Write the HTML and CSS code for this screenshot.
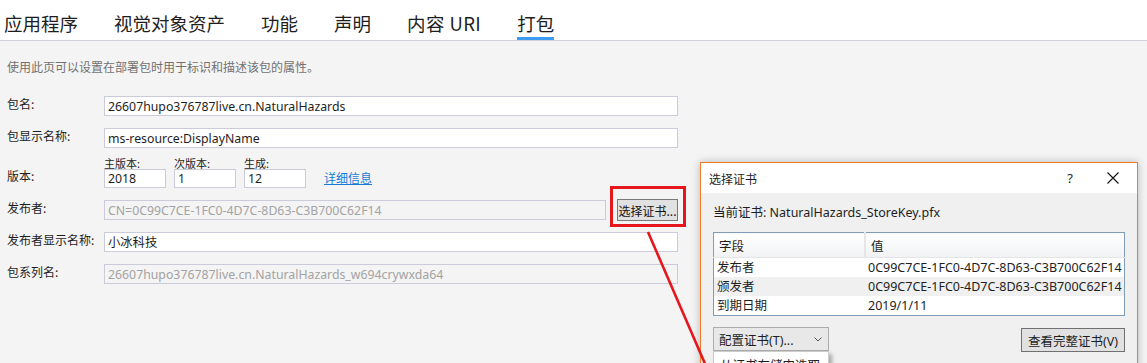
FILE: index.html
```html
<!doctype html>
<html>

	<head>
		<title>打包</title>
		<meta charset="utf-8" />
		<link rel="stylesheet" href="styles.css">
	</head>

	<body>

		<ul class="tabs">
			<li>应用程序</li>
			<li>视觉对象资产</li>
			<li>功能</li>
			<li>声明</li>
			<li>内容 URI</li>
			<li class="active">打包</li>
		</ul>

		<div class="page">
			<p class="desc">使用此页可以设置在部署包时用于标识和描述该包的属性。</p>

			<div class="row">
				<label>包名:</label>
				<input class="wide" type="text" value="26607hupo376787live.cn.NaturalHazards" />
			</div>
			<div class="row">
				<label>包显示名称:</label>
				<input class="wide" type="text" value="ms-resource:DisplayName" />
			</div>
			<div class="row version">
				<label>版本:</label>
				<div class="ver">
					<span>主版本:</span>
					<input type="text" value="2018" />
				</div>
				<div class="ver">
					<span>次版本:</span>
					<input type="text" value="1" />
				</div>
				<div class="ver">
					<span>生成:</span>
					<input type="text" value="12" />
				</div>
				<a href="#">详细信息</a>
			</div>
			<div class="row">
				<label>发布者:</label>
				<input class="pub" type="text" disabled value="CN=0C99C7CE-1FC0-4D7C-8D63-C3B700C62F14" />
				<button class="btn">选择证书...</button>
			</div>
			<div class="row">
				<label>发布者显示名称:</label>
				<input class="wide" type="text" value="小冰科技" />
			</div>
			<div class="row">
				<label>包系列名:</label>
				<input class="wide" type="text" disabled value="26607hupo376787live.cn.NaturalHazards_w694crywxda64" />
			</div>
		</div>

		<div class="mark"></div>

		<div class="dialog">
			<div class="title">
				<span>选择证书</span>
				<span class="help">?</span>
				<svg class="close" width="12" height="12" viewBox="0 0 12 12">
					<path d="M0.5 0.5 L11.5 11.5 M11.5 0.5 L0.5 11.5" stroke="#111" stroke-width="1.1" fill="none" />
				</svg>
			</div>
			<div class="body">
				<p class="cur">当前证书: NaturalHazards_StoreKey.pfx</p>
				<table class="grid">
					<tr>
						<th class="c1">字段</th>
						<th>值</th>
					</tr>
					<tr>
						<td>发布者</td>
						<td>0C99C7CE-1FC0-4D7C-8D63-C3B700C62F14</td>
					</tr>
					<tr class="alt">
						<td>颁发者</td>
						<td>0C99C7CE-1FC0-4D7C-8D63-C3B700C62F14</td>
					</tr>
					<tr>
						<td>到期日期</td>
						<td>2019/1/11</td>
					</tr>
				</table>
				<div class="actions">
					<div class="drop">
						<button class="cfg">配置证书(T)...<svg width="8" height="5" viewBox="0 0 8 5"><path d="M0.5 0.5 L4 4 L7.5 0.5" stroke="#555" fill="none" /></svg></button>
						<div class="menu">从证书存储中选取...</div>
					</div>
					<button class="full">查看完整证书(V)</button>
				</div>
			</div>
		</div>

		<svg class="arrow" width="1147" height="363">
			<line x1="648" y1="232" x2="706" y2="366" stroke="#e5161c" stroke-width="2.6" />
		</svg>

	</body>

</html>
```

FILE: styles.css
```css
body {
	margin: 0;
	background: #f4f4f4;
	font-family: "Segoe UI", "Noto Sans", "Noto Sans CJK SC", sans-serif;
	font-size: 13px;
	color: #1e1e1e;
	overflow: hidden;
	height: 363px;
	position: relative;
}

.tabs {
	display: flex;
	gap: 36px;
	margin: 0;
	padding: 0 0 0 4px;
	height: 40px;
	background: #fff;
	border-bottom: 1px solid #cfcfd8;
	list-style: none;
}

.tabs li {
	position: relative;
	font-family: "Noto Sans CJK SC", sans-serif;
	font-size: 18.5px;
	line-height: 47px;
	height: 40px;
	color: #1e1e1e;
}

.tabs li:nth-child(5) {
	letter-spacing: 0.4px;
}

.tabs .active::after {
	content: "";
	position: absolute;
	left: 0;
	right: 0;
	bottom: 0;
	height: 3px;
	background: #3d9cf2;
}

.page {
	padding: 0 0 0 7px;
}

.desc {
	margin: 0;
	padding: 18px 0 0;
	height: 37px;
	font-family: "Noto Sans CJK SC", sans-serif;
	font-size: 12px;
	line-height: 16px;
	color: #717171;
}

.row {
	display: flex;
	align-items: center;
	height: 20px;
	margin-bottom: 12px;
}

.row label {
	width: 97px;
	margin-bottom: 5px;
	font-family: "Noto Sans CJK SC", sans-serif;
	font-size: 12px;
	color: #1e1e1e;
}

input {
	box-sizing: border-box;
	height: 20px;
	border: 1px solid #cbcbdc;
	background: #fff;
	padding: 0 3px;
	font-family: "Segoe UI", "Noto Sans", "Noto Sans CJK SC", sans-serif;
	font-size: 12.3px;
	color: #1e1e1e;
	outline: none;
}

input[disabled] {
	background: #f4f4f4;
	color: #a3a3a3;
}

.wide {
	width: 574px;
}

.pub {
	width: 502px;
}

.version {
	height: 28px;
	align-items: flex-end;
	margin-bottom: 12px;
}

.version label {
	margin-bottom: 4px;
}

.ver {
	display: flex;
	flex-direction: column;
	margin-right: 8px;
}

.ver span {
	font-family: "Noto Sans CJK SC", sans-serif;
	font-size: 11px;
	line-height: 12px;
	margin-bottom: 0;
}

.ver input {
	width: 62px;
	height: 19px;
}

.version a {
	margin: 0 0 2px 10px;
	font-family: "Noto Sans CJK SC", sans-serif;
	font-size: 12px;
	color: #1a7ad6;
}

.btn {
	box-sizing: border-box;
	margin-left: 11px;
	width: 61px;
	height: 22px;
	padding: 0;
	border: 1px solid #7a7a7a;
	background: #e1e1e1;
	font-family: "Noto Sans CJK SC", sans-serif;
	font-size: 12px;
	color: #111;
}

.mark {
	position: absolute;
	left: 610px;
	top: 186px;
	width: 70px;
	height: 35px;
	border: 3px solid #e5161c;
}

.arrow {
	position: absolute;
	left: 0;
	top: 0;
	z-index: 5;
}

.dialog {
	position: absolute;
	left: 700px;
	top: 162px;
	width: 436px;
	height: 240px;
	border: 1px solid #ee7c2c;
	background: #f0f0f0;
	box-shadow: 0 0 8px rgba(0, 0, 0, 0.25);
	font-family: "Segoe UI", "Noto Sans", "Noto Sans CJK SC", sans-serif;
	font-size: 12.5px;
}

.title {
	display: flex;
	align-items: center;
	height: 30px;
	padding-left: 8px;
	background: #fff;
	font-family: "Noto Sans CJK SC", sans-serif;
	font-size: 12px;
}

.title span:first-child {
	flex: 1;
}

.help {
	font-family: "Segoe UI", "Noto Sans", sans-serif;
	font-size: 13px;
	margin-right: 34px;
}

.close {
	margin-right: 18px;
}

.body {
	padding: 0 12px;
}

.cur {
	margin: 0;
	padding-top: 12px;
	height: 27px;
	line-height: 15px;
}

.grid {
	width: 412px;
	border-collapse: collapse;
	border: 1px solid #7f9db9;
	background: #fff;
}

.grid th {
	height: 24px;
	padding: 0 0 0 5px;
	text-align: left;
	font-weight: normal;
	background: linear-gradient(#fff, #f1f2f4);
	border-bottom: 1px solid #e5e5e5;
}

.grid .c1 {
	width: 145px;
	border-right: 2px solid #e6e6e6;
}

.grid td {
	height: 19px;
	padding: 0 0 0 3px;
	line-height: 19px;
	white-space: nowrap;
}

.grid .alt td {
	background: #f0f0f0;
}

.actions {
	display: flex;
	justify-content: space-between;
	margin-top: 11px;
}

.drop {
	position: relative;
}

.cfg,
.full {
	box-sizing: border-box;
	height: 24px;
	font-family: "Segoe UI", "Noto Sans", "Noto Sans CJK SC", sans-serif;
	font-size: 12.5px;
	color: #1e1e1e;
}

.cfg {
	display: flex;
	align-items: center;
	justify-content: space-between;
	width: 116px;
	padding: 0 6px 0 5px;
	border: 1px solid #adadad;
	background: #e8e8e8;
}

.full {
	width: 104px;
	margin-top: 1px;
	padding: 0;
	border: 1px solid #707070;
	background: #e1e1e1;
}

.menu {
	position: absolute;
	left: 0;
	top: 24px;
	width: 116px;
	box-sizing: border-box;
	padding: 3px 6px;
	background: #fff;
	border: 1px solid #ccc;
	box-shadow: 3px 3px 4px rgba(0, 0, 0, 0.3);
	white-space: nowrap;
	overflow: hidden;
}
```
